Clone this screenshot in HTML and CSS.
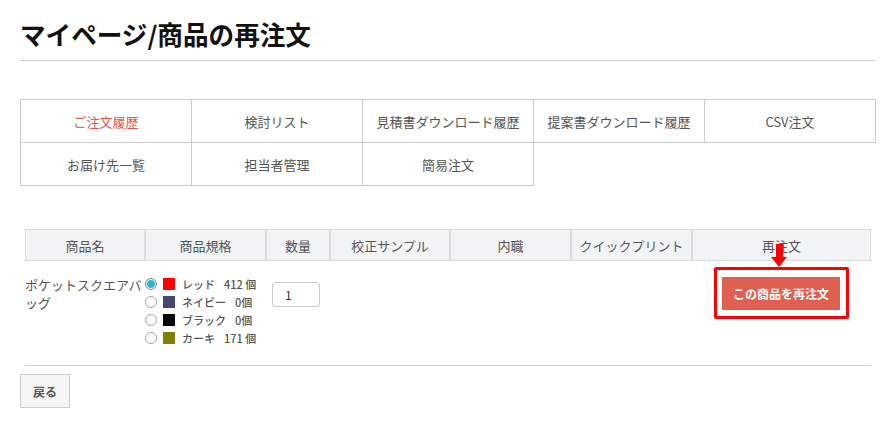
FILE: index.html
```html
<!DOCTYPE html>
<html lang="ja">
<head>
    <meta charset="UTF-8">
    <title>マイページ/商品の再注文</title>
    <link rel="stylesheet" href="styles.css">
</head>
<body>
<div class="page">

    <h1 class="page-title">マイページ/商品の再注文</h1>
    <hr class="title-line">

    <!-- mypage menu -->
    <div class="menu">
        <a class="menu-item active">ご注文履歴</a>
        <a class="menu-item">検討リスト</a>
        <a class="menu-item">見積書ダウンロード履歴</a>
        <a class="menu-item">提案書ダウンロード履歴</a>
        <a class="menu-item">CSV注文</a>
        <a class="menu-item">お届け先一覧</a>
        <a class="menu-item">担当者管理</a>
        <a class="menu-item">簡易注文</a>
    </div>

    <table class="order-table">
        <thead>
            <tr>
                <th class="col-name">商品名</th>
                <th class="col-spec">商品規格</th>
                <th class="col-qty">数量</th>
                <th class="col-sample">校正サンプル</th>
                <th class="col-inner">内職</th>
                <th class="col-quick">クイックプリント</th>
                <th class="col-reorder">再注文</th>
            </tr>
        </thead>
        <tbody>
            <tr>
                <td class="item-name">ポケットスクエアバッグ</td>
                <td>
                    <ul class="variants">
                        <li><span class="radio checked"></span><span class="swatch red"></span><span class="variant-text">レッド<span class="stock">412 個</span></span></li>
                        <li><span class="radio"></span><span class="swatch navy"></span><span class="variant-text">ネイビー<span class="stock">0個</span></span></li>
                        <li><span class="radio"></span><span class="swatch black"></span><span class="variant-text">ブラック<span class="stock">0個</span></span></li>
                        <li><span class="radio"></span><span class="swatch khaki"></span><span class="variant-text">カーキ<span class="stock">171 個</span></span></li>
                    </ul>
                </td>
                <td><input class="qty-input" type="text" value="1"></td>
                <td></td>
                <td></td>
                <td></td>
                <td class="reorder-cell">
                    <div class="highlight">
                        <span class="arrow"></span>
                        <button class="reorder-button">この商品を再注文</button>
                    </div>
                </td>
            </tr>
        </tbody>
    </table>

    <button class="back-button">戻る</button>

</div>
</body>
</html>
```

FILE: styles.css
```css
body {
    margin: 0;
    font-family: "Noto Sans CJK JP", "Noto Sans", sans-serif;
    color: #555;
    background-color: #fff;
}
.page {
    width: 855px;
    padding: 0 15px 20px 20px;
}
.page-title {
    margin: 16px 0 8px;
    font-size: 25.6px;
    line-height: 36px;
    font-weight: bold;
    color: #111;
}
.title-line {
    margin: 0 0 38px;
    border: none;
    border-top: 1px solid #ccc;
}

/* menu */
.menu {
    display: flex;
    flex-wrap: wrap;
    width: 856px;
}
.menu-item {
    box-sizing: border-box;
    width: 172px;
    height: 44px;
    margin: 0 -1px -1px 0;
    border: 1px solid #ccc;
    display: flex;
    align-items: center;
    justify-content: center;
    font-size: 13px;
    color: #555;
}
.menu-item.active {
    color: #e0574a;
}

/* order table */
.order-table {
    margin: 44px 0 0 5px;
    width: 846px;
    border-collapse: separate;
    border-spacing: 0;
    table-layout: fixed;
}
.order-table th {
    height: 30px;
    padding: 0;
    background-color: #f2f3f5;
    border: 1px solid #dcdcdc;
    font-size: 13px;
    font-weight: normal;
    color: #555;
}
.col-name { width: 118px; }
.col-spec { width: 119px; }
.col-qty { width: 62px; }
.col-sample { width: 118px; }
.col-inner { width: 119px; }
.col-quick { width: 119px; }
.order-table td {
    box-sizing: border-box;
    height: 105px;
    padding: 0;
    vertical-align: top;
    border-bottom: 1px solid #ccc;
}
.item-name {
    padding-top: 15px !important;
    font-size: 13px;
    line-height: 18px;
    color: #555;
}
.variants {
    list-style: none;
    margin: 14px 0 0;
    padding: 0;
}
.variants li {
    display: flex;
    align-items: center;
    height: 18px;
}
.radio {
    box-sizing: border-box;
    width: 12px;
    height: 12px;
    border: 1px solid #aaa;
    border-radius: 50%;
    background-color: #fff;
    margin-right: 6px;
    display: flex;
    align-items: center;
    justify-content: center;
}
.radio.checked {
    border-color: #888;
}
.radio.checked::after {
    content: "";
    width: 8px;
    height: 8px;
    border-radius: 50%;
    background-color: #2bb6d8;
}
.swatch {
    width: 12px;
    height: 12px;
    margin-right: 7px;
}
.swatch.red { background-color: #ff0000; }
.swatch.navy { background-color: #464670; }
.swatch.black { background-color: #000; }
.swatch.khaki { background-color: #808000; }
.variant-text {
    font-size: 11px;
    font-weight: 500;
    color: #555;
}
.stock {
    margin-left: 9px;
}
.qty-input {
    box-sizing: border-box;
    width: 48px;
    height: 25px;
    margin: 21px 0 0 6px;
    padding: 0 12px;
    border: 1px solid #ccc;
    border-radius: 3px;
    font-family: "Noto Sans CJK JP", sans-serif;
    font-size: 12px;
    color: #333;
}
.reorder-cell {
    text-align: center;
}
.highlight {
    position: relative;
    display: inline-block;
    margin-top: 6px;
    padding: 7px 6px 6px 5px;
    border: 3px solid #ff0000;
    border-radius: 2px;
}
.arrow {
    position: absolute;
    left: 59px;
    top: -26px;
    width: 7px;
    height: 14px;
    background-color: #ff0000;
}
.arrow::after {
    content: "";
    position: absolute;
    left: -5px;
    top: 13px;
    border-left: 8.5px solid transparent;
    border-right: 8.5px solid transparent;
    border-top: 10px solid #ff0000;
}
.reorder-button {
    display: block;
    width: 118px;
    height: 33px;
    padding: 0;
    border: none;
    background-color: #e05f51;
    color: #fff;
    font-family: "Noto Sans CJK JP", sans-serif;
    font-size: 12px;
    font-weight: bold;
}
.back-button {
    display: block;
    box-sizing: border-box;
    width: 50px;
    height: 34px;
    margin-top: 8px;
    padding: 0;
    border: 1px solid #ccc;
    background-color: #f5f5f5;
    font-family: "Noto Sans CJK JP", sans-serif;
    font-size: 12px;
    font-weight: bold;
    color: #555;
}
```
